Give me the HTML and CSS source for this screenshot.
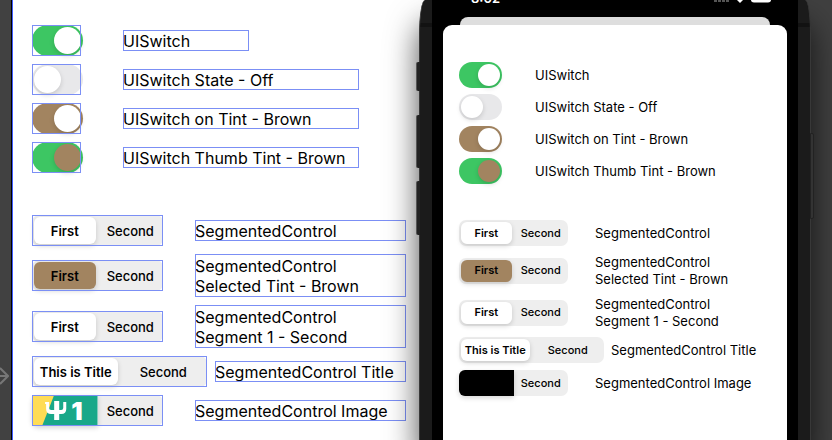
FILE: index.html
```html
<!DOCTYPE html>
<html lang="en">
<head>
  <meta charset="UTF-8">
  <meta name="viewport" content="width=device-width, initial-scale=1.0">
  <title>UISwitch and SegmentedControl</title>
  <link rel="stylesheet" href="styles.css">
</head>
<body>
  <aside class="gutter">
    <svg class="arrow" width="9" height="20" viewBox="0 0 9 20" aria-hidden="true">
      <path d="M0 10H7M0 2L8 10L0 18" fill="none" stroke="#777" stroke-width="2"/>
    </svg>
  </aside>

  <main class="canvas controls" id="canvas"></main>

  <section class="phone">
    <i class="side mute"></i>
    <i class="side volume-up"></i>
    <i class="side volume-down"></i>
    <i class="side power"></i>
    <div class="screen">
      <header class="status">
        <time>8:02</time>
        <svg width="58" height="3" viewBox="0 0 58 3" aria-hidden="true">
          <path d="M0 0h3v2H0zM4 0h3v2H4zM8 0h3v2H8zM12 0h3v2h-3z" fill="#555"/>
          <path d="M23 0h6l-3 3z" fill="#fff"/>
          <path d="M37 0h20q0 2-3 2.500H40Q37 2 37 0z" fill="#fff"/>
        </svg>
      </header>
      <div class="sheet-behind"></div>
      <div class="sheet controls" id="sheet"></div>
    </div>
  </section>

  <script>
    const switches = [
      { text: 'UISwitch', on: true, style: '' },
      { text: 'UISwitch State - Off', on: false, style: '' },
      { text: 'UISwitch on Tint - Brown', on: true, style: 'tint-brown' },
      { text: 'UISwitch Thumb Tint - Brown', on: true, style: 'thumb-brown' }
    ];

    const segments = [
      { text: 'SegmentedControl', first: 'First', style: '' },
      { text: 'SegmentedControl<br>Selected Tint - Brown', first: 'First', style: 'tall brown' },
      { text: 'SegmentedControl<br>Segment 1 - Second', first: 'First', style: 'tall' },
      { text: 'SegmentedControl Title', first: 'This is Title', style: 'wide' },
      { text: 'SegmentedControl Image', first: '', style: 'image' }
    ];

    const picture = `
      <svg viewBox="0 0 65 31" preserveAspectRatio="none" role="img" aria-label="Image">
        <rect width="65" height="31" fill="#19a889"/>
        <path d="M0 0H22L10 31H0z" fill="#ffdc55"/>
        <path d="M13 7h4v6q0 2 2 2h3V6h5v9h2q2 0 2-2V7h3v7q0 5-5 5h-2v6h-5v-6h-3q-5 0-5-5V9h-1z" fill="#fff"/>
        <text x="39" y="25" class="digit">1</text>
      </svg>`;

    function render(id) {
      const box = document.getElementById(id);

      const switchRows = switches.map((s, i) => `
        <div class="row ${s.style}">
          <span class="switch-box frame">
            <input type="checkbox" role="switch" class="switch" id="${id}-switch-${i}" ${s.on ? 'checked' : ''}>
          </span>
          <label class="caption frame" for="${id}-switch-${i}">${s.text}</label>
        </div>`);

      const segmentRows = segments.map((s, i) => `
        <div class="row ${s.style}">
          <div class="segmented frame" role="radiogroup" aria-labelledby="${id}-seg-${i}">
            <label class="segment">
              <input type="radio" name="${id}-seg-${i}" checked>
              <span>${s.style === 'image' && id === 'canvas' ? picture : s.first}</span>
            </label>
            <label class="segment">
              <input type="radio" name="${id}-seg-${i}">
              <span>Second</span>
            </label>
          </div>
          <p class="caption frame" id="${id}-seg-${i}">${s.text}</p>
        </div>`);

      box.innerHTML = `
        <div class="group switches">${switchRows.join('')}</div>
        <div class="group segments">${segmentRows.join('')}</div>`;
    }

    render('canvas');
    render('sheet');
  </script>
</body>
</html>
```
FILE: styles.css
```css
* {
  box-sizing: border-box;
}

body {
  margin: 0;
  min-height: 100vh;
  display: grid;
  grid-template-columns: 12px 407fr 392fr 21px;
  overflow: hidden;
  font-family: Inter, "Liberation Sans", sans-serif;
  color: #000;
  background: linear-gradient(to right, #fff 75%, #404040 75%);
}

.gutter {
  display: flex;
  align-items: flex-end;
  padding-bottom: 54px;
  background: #414141;
  border-right: 1px solid #000;
}

/* rows of controls, used at two sizes */
.controls {
  --green: #3dc663;
  --brown: #a28460;
  --line: #7b8ff5;
}

.canvas {
  --switch-width: 51px;
  --switch-box: 49px;
  --row: 31px;
  --tall: 43px;
  --thumb: 27px;
  --segmented: 131px;
  --segmented-wide: 175px;
  padding: 25px 13px 0 19px;
  border-left: 1px solid #3d5cff;
  font-size: 16px;
  line-height: 20px;
}

.sheet {
  --switch-width: 43px;
  --switch-box: 43px;
  --row: 26px;
  --tall: 35px;
  --thumb: 22px;
  --segmented: 109px;
  --segmented-wide: 145px;
  flex: 1;
  padding: 37px 16px 0;
  background: #fff;
  border-radius: 9px 9px 0 0;
  font-size: 13px;
  line-height: 17px;
}

.group {
  display: flex;
  flex-direction: column;
}

.canvas .group {
  gap: 8px;
}

.canvas .segments {
  margin-top: 42px;
}

.sheet .switches {
  gap: 6px;
}

.sheet .segments {
  gap: 7px;
  margin-top: 36px;
}

.row {
  display: flex;
  align-items: center;
  min-height: var(--row);
}

.row.tall {
  min-height: var(--tall);
}

.frame {
  position: relative;
}

.canvas .frame::after {
  content: "";
  position: absolute;
  inset: 0;
  border: 1px solid var(--line);
  pointer-events: none;
}

.caption {
  display: flex;
  align-items: center;
  margin: 0;
  white-space: nowrap;
}

.canvas .caption {
  min-height: 21px;
}

.canvas .tall .caption {
  min-height: 43px;
}

.canvas .switches .caption {
  width: 236px;
}

.canvas .switches .row:first-child .caption {
  width: 126px;
}

.canvas .segments .caption {
  flex: 1;
}

.canvas .switches .row {
  gap: 42px;
}

.canvas .segments .row {
  gap: 32px;
}

.sheet .switches .row {
  gap: 33px;
}

.sheet .segments .row {
  gap: 27px;
}

.canvas .segments .wide {
  gap: 8px;
}

.sheet .segments .wide {
  gap: 7px;
}

/* switch */
.switch-box {
  width: var(--switch-box);
  height: var(--row);
}

.switch {
  appearance: none;
  display: block;
  width: var(--switch-width);
  height: var(--row);
  margin: 0;
  padding: 2px;
  border-radius: 16px;
  background: #e8e8ea;
}

.switch::before {
  content: "";
  display: block;
  width: var(--thumb);
  height: 100%;
  border-radius: 50%;
  background: #fff;
  box-shadow: 0 2px 5px rgba(0, 0, 0, 0.15);
}

.switch:checked {
  background: var(--green);
}

.switch:checked::before {
  margin-left: auto;
}

.tint-brown .switch:checked {
  background: var(--brown);
}

.thumb-brown .switch::before {
  background: var(--brown);
}

/* segmented control */
.segmented {
  display: flex;
  flex: none;
  width: var(--segmented);
  height: var(--row);
  border-radius: 7px;
  background: #eee;
  font-size: 13px;
  font-weight: 500;
}

.sheet .segmented {
  font-size: 11px;
}

.wide .segmented {
  width: var(--segmented-wide);
}

.segment {
  flex: none;
  width: 50%;
  display: flex;
  padding: 2px;
}

.segment input {
  appearance: none;
  position: absolute;
  margin: 0;
}

.segment span {
  flex: 1;
  display: flex;
  align-items: center;
  justify-content: center;
  border-radius: 6px;
  white-space: nowrap;
}

.segment input:checked + span {
  background: #fff;
  font-weight: 600;
  box-shadow: 0 2px 5px rgba(0, 0, 0, 0.16);
}

.brown .segment input:checked + span {
  background: var(--brown);
}

.image .segment:first-child {
  padding: 0;
}

.image .segment input:checked + span {
  background: #000;
  border-radius: 6px 0 0 6px;
}

.canvas .image .segment input:checked + span {
  background: none;
}

.segment svg {
  display: block;
  width: 100%;
  height: 100%;
}

.digit {
  fill: #fff;
  font-size: 25px;
  font-weight: 900;
}

/* phone */
.phone {
  position: relative;
  display: flex;
  padding: 0 12px;
  background: linear-gradient(#121212, #121212) 0 23px / 100% 4px no-repeat, #1b1b1b;
  border: solid #383838;
  border-width: 0 1px;
  border-radius: 6px 6px 0 0 / 34px 34px 0 0;
  box-shadow: 0 24px 32px rgba(0, 0, 0, 0.7);
}

.screen {
  flex: 1;
  display: flex;
  flex-direction: column;
  padding: 0 11px;
  background: #000;
}

.status {
  display: flex;
  justify-content: space-between;
  height: 17px;
  padding: 0 15px 0 28px;
  overflow: hidden;
  color: #fff;
  font-size: 13px;
  font-weight: 600;
  line-height: 16px;
}

.status time {
  margin-top: -10px;
}

.sheet-behind {
  height: 8px;
  margin: 0 17px;
  background: #dedede;
  border-radius: 8px 8px 0 0;
}

.side {
  position: absolute;
  left: -4px;
  width: 4px;
  background: #222;
  border-left: 1px solid #555;
  border-radius: 2px 0 0 2px;
}

.mute {
  top: 62px;
  height: 29px;
}

.volume-up {
  top: 115px;
  height: 53px;
}

.volume-down {
  top: 181px;
  height: 54px;
}

.power {
  left: auto;
  right: -4px;
  top: 133px;
  height: 86px;
  background: #333;
  border: 1px solid #222;
  border-radius: 0 2px 2px 0;
}
```
